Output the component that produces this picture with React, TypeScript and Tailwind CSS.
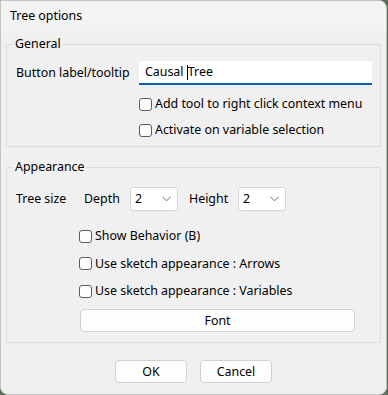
import React from "react";

const font = { fontFamily: '"Noto Sans", "Segoe UI", sans-serif' };

function Check({ label }: { label: string }) {
  return (
    <div className="flex items-center h-[20px]">
      <div className="w-[13px] h-[13px] border border-[#5c5c5c] rounded-[3px] bg-white shrink-0" />
      <span className="ml-[3px] text-[12.4px] leading-[16px] text-black">{label}</span>
    </div>
  );
}

function Combo({ value }: { value: string }) {
  return (
    <div className="w-[48px] h-[24px] bg-white border border-[#d4d4d4] rounded-[3px] flex items-center justify-between pl-[4px] pr-[6px]">
      <span className="text-[12.4px] leading-[16px] text-black">{value}</span>
      <svg width="9" height="6" viewBox="0 0 9 6" fill="none">
        <path d="M0.5 0.8 L4.5 4.8 L8.5 0.8" stroke="#6e6e6e" strokeWidth="1" />
      </svg>
    </div>
  );
}

function Btn({ label, className }: { label: string; className: string }) {
  return (
    <div
      className={
        "h-[23px] bg-[#fdfdfd] border border-[#d0d0d0] rounded-[4px] flex items-center justify-center text-[12.4px] leading-[16px] text-black " +
        className
      }
    >
      {label}
    </div>
  );
}

export default function App() {
  return (
    <div className="w-[388px] h-[395px] bg-[#5d6b5d] overflow-hidden" style={font}>
      <div className="w-[387px] h-[395px] bg-[#f0f0f0] border border-[#c4c4c4] rounded-tr-[8px] rounded-b-[8px] overflow-hidden flex flex-col">
        {/* Title bar */}
        <div className="h-[30px] bg-[#f3f3f3] flex items-center pl-[9px] shrink-0">
          <span className="text-[12.4px] leading-[16px] text-black">Tree options</span>
        </div>

        <div className="px-[5px] flex flex-col">
          {/* General */}
          <fieldset className="mt-[5px] border border-[#dcdcdc] rounded-[2px] pl-[9px] pr-[8px] pb-[6px]">
            <legend className="-ml-[3px] px-[2px] text-[12.4px] leading-[16px] text-black">General</legend>
            <div className="mt-[9px] flex items-center h-[24px]">
              <span className="w-[123px] text-[12.4px] leading-[16px] text-black">Button label/tooltip</span>
              <div className="w-[233px] h-[24px] bg-white border-b-2 border-[#005fb8] rounded-t-[3px] flex items-center pl-[6px] text-[12.4px] leading-[16px] text-black">
                <span>Causal&nbsp;</span>
                <span className="w-px h-[15px] bg-black" />
                <span>Tree</span>
              </div>
            </div>
            <div className="ml-[123px] mt-[9px] flex flex-col gap-[6px]">
              <Check label="Add tool to right click context menu" />
              <Check label="Activate on variable selection" />
            </div>
          </fieldset>

          {/* Appearance */}
          <fieldset className="mt-[12px] border border-[#dcdcdc] rounded-[2px] pl-[9px] pr-[8px] pb-[10px]">
            <legend className="-ml-[3px] px-[2px] text-[12.4px] leading-[16px] text-black">Appearance</legend>
            <div className="mt-[12px] flex items-center h-[24px] text-[12.4px] leading-[16px] text-black">
              <span className="w-[68px]">Tree size</span>
              <span className="w-[46px]">Depth</span>
              <Combo value="2" />
              <span className="ml-[11px] w-[49px]">Height</span>
              <Combo value="2" />
            </div>
            <div className="ml-[63px] mt-[15px] flex flex-col gap-[7.5px]">
              <Check label="Show Behavior (B)" />
              <Check label="Use sketch appearance : Arrows" />
              <Check label="Use sketch appearance : Variables" />
            </div>
            <div className="ml-[64px] mt-[8px]">
              <Btn label="Font" className="w-[275px]" />
            </div>
          </fieldset>

          {/* Dialog buttons */}
          <div className="mt-[17px] flex justify-center gap-[13px]">
            <Btn label="OK" className="w-[72px]" />
            <Btn label="Cancel" className="w-[72px]" />
          </div>
        </div>
      </div>
    </div>
  );
}
